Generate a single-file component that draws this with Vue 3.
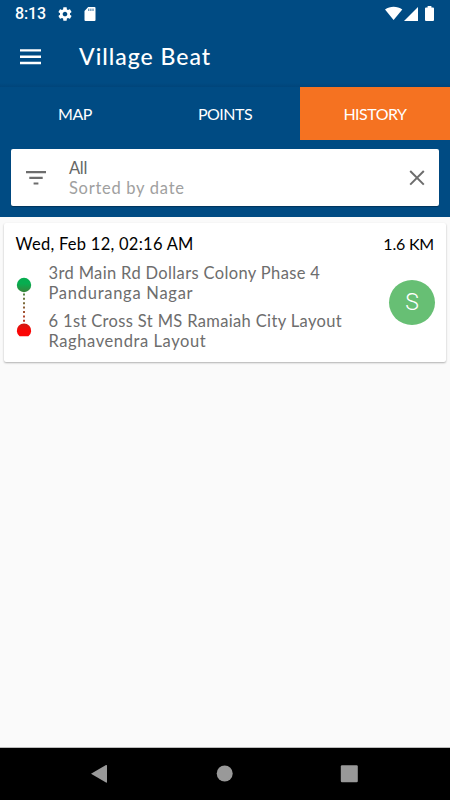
<template>
    <div class="screen">
        <div class="status-bar">
            <span class="clock">8:13</span>
            <svg class="gear" viewBox="0 0 24 24" width="16" height="16">
                <path fill="#fff" d="M19.43 12.98c.04-.32.07-.64.07-.98s-.03-.66-.07-.98l2.11-1.65c.19-.15.24-.42.12-.64l-2-3.46c-.12-.22-.39-.3-.61-.22l-2.49 1c-.52-.4-1.08-.73-1.69-.98l-.38-2.65C14.46 2.18 14.25 2 14 2h-4c-.25 0-.46.18-.49.42l-.38 2.65c-.61.25-1.17.59-1.69.98l-2.49-1c-.23-.09-.49 0-.61.22l-2 3.46c-.13.22-.07.49.12.64l2.11 1.65c-.04.32-.07.65-.07.98s.03.66.07.98l-2.11 1.65c-.19.15-.24.42-.12.64l2 3.46c.12.22.39.3.61.22l2.49-1c.52.4 1.08.73 1.69.98l.38 2.65c.03.24.24.42.49.42h4c.25 0 .46-.18.49-.42l.38-2.65c.61-.25 1.17-.59 1.69-.98l2.49 1c.23.09.49 0 .61-.22l2-3.46c.12-.22.07-.49-.12-.64l-2.11-1.65zM12 15.5c-1.93 0-3.5-1.57-3.5-3.5s1.57-3.5 3.5-3.5 3.5 1.57 3.5 3.5-1.57 3.5-3.5 3.5z" />
            </svg>
            <svg class="sd" viewBox="0 0 12 14" width="12" height="14">
                <path fill="#fff" d="M4.2 0H10.5Q11.5 0 11.5 1V13Q11.5 14 10.5 14H1.5Q.5 14 .5 13V4z" />
                <path stroke="#004b83" stroke-width=".8" d="M4.8 1.6v2.4M6.9 1.6v2.4M9 1.6v2.4" />
            </svg>
            <div class="signals">
                <svg viewBox="0 0 33 16" width="33" height="16">
                    <path fill="#fff" d="M0 3.5C5-.3 12.300-.3 17.300 3.500L8.600 14z" />
                    <path fill="#fff" d="M33 1V15H19z" />
                </svg>
                <svg class="battery" viewBox="0 0 9 15" width="9" height="15">
                    <path fill="#fff" d="M2.600 0h3.800v1.400H8Q9 1.400 9 2.400V14Q9 15 8 15H1Q0 15 0 14V2.400Q0 1.400 1 1.400h1.600z" />
                </svg>
            </div>
        </div>

        <div class="toolbar">
            <svg class="burger" viewBox="0 0 21 16" width="21" height="16">
                <path fill="#fff" d="M0 .2h21v2.400H0zM0 6.500h21v2.400H0zM0 12.800h21v2.400H0z" />
            </svg>
            <h1>Village Beat</h1>
        </div>

        <div class="tabs">
            <div v-for="tab in tabs" :key="tab" class="tab" :class="{ active: tab === current }">
                <span>{{ tab }}</span>
            </div>
        </div>

        <div class="filter-wrap">
            <div class="filter">
                <svg class="filter-icon" viewBox="0 0 20 14" width="20" height="14">
                    <path fill="#6d6d6d" d="M0 0h20v2.200H0zM3.300 5.800h13.400V8H3.300zM7.600 11.500h4.800v2.100H7.600z" />
                </svg>
                <div class="filter-text">
                    <div class="name">All</div>
                    <div class="sort">Sorted by date</div>
                </div>
                <svg class="close" viewBox="0 0 16 16" width="16" height="16">
                    <path stroke="#6d6d6d" stroke-width="2" d="M1.200 1l13.600 13.600M14.800 1L1.200 14.600" />
                </svg>
            </div>
        </div>

        <div class="list">
            <div v-for="(trip, index) in trips" :key="index" class="trip">
                <div class="trip-head">
                    <span class="date">{{ trip.date }}</span>
                    <span class="distance">{{ trip.distance }}</span>
                </div>
                <div class="trip-body">
                    <svg class="route" viewBox="0 0 16 60" width="16" height="60">
                        <defs>
                            <linearGradient id="start" x1="0" y1="0" x2="0" y2="1">
                                <stop offset="0.4" stop-color="#07ad50" />
                                <stop offset="1" stop-color="#38843a" />
                            </linearGradient>
                            <linearGradient id="end" x1="0" y1="0" x2="0" y2="1">
                                <stop offset="0" stop-color="#cf1c14" />
                                <stop offset="0.6" stop-color="#fb0505" />
                            </linearGradient>
                            <linearGradient id="line" gradientUnits="userSpaceOnUse" x1="0" y1="14" x2="0" y2="46">
                                <stop offset="0" stop-color="#4f8a45" />
                                <stop offset="1" stop-color="#cf3127" />
                            </linearGradient>
                        </defs>
                        <path stroke="url(#line)" stroke-width="2" stroke-dasharray="2 2.4" d="M7 15.400L7.010 46" />
                        <circle cx="7" cy="7" r="7.2" fill="url(#start)" />
                        <path fill="url(#end)" d="M2.600 58.300a7.200 7.200 0 1 1 8.800 0z" />
                    </svg>
                    <div class="places">
                        <div v-for="(place, i) in trip.places" :key="i" class="place">
                            <div v-for="(line, n) in place" :key="n">
                                <span :style="{ letterSpacing: line.spacing + 'px' }">{{ line.text }}</span>
                            </div>
                        </div>
                    </div>
                    <div class="avatar">{{ trip.initial }}</div>
                </div>
            </div>
        </div>

        <div class="nav-bar">
            <svg viewBox="0 0 450 52" width="450" height="52">
                <path fill="#999" d="M91 25.700L106 17Q107 16.600 107 17.500V34Q107 35 106 34.500z" />
                <circle cx="224.7" cy="25.5" r="8" fill="#999" />
                <rect x="340.8" y="17.2" width="17" height="17" rx="1.2" fill="#999" />
            </svg>
        </div>
    </div>
</template>

<script setup>
import { ref } from 'vue'

const tabs = ['MAP', 'POINTS', 'HISTORY']
const current = ref('HISTORY')

const trips = ref([
    {
        date: 'Wed, Feb 12, 02:16 AM',
        distance: '1.6 KM',
        initial: 'S',
        places: [
            [
                { text: '3rd Main Rd Dollars Colony Phase 4', spacing: 0.36 },
                { text: 'Panduranga Nagar', spacing: 0.73 },
            ],
            [
                { text: '6 1st Cross St MS Ramaiah City Layout', spacing: 0.35 },
                { text: 'Raghavendra Layout', spacing: 0.59 },
            ],
        ],
    },
])
</script>

<style>
body {
    background: #fafafa;
}
</style>

<style scoped>
.screen {
    width: 450px;
    height: 800px;
    display: flex;
    flex-direction: column;
    background: #fafafa;
    font-family: Lato, sans-serif;
    overflow: hidden;
    white-space: nowrap;
}

svg {
    display: block;
    flex: none;
}

.status-bar {
    height: 27px;
    flex: none;
    display: flex;
    align-items: center;
    padding-left: 15px;
    background: #004b83;
    color: #fff;
}

.clock {
    width: 42px;
    font: 500 16px/20px Roboto, sans-serif;
    letter-spacing: -0.1px;
}

.sd {
    margin-left: 11px;
}

.signals {
    display: flex;
    align-items: center;
    margin-left: auto;
    padding-right: 16px;
}

.battery {
    margin-left: 7px;
}

.toolbar {
    height: 60px;
    flex: none;
    display: flex;
    align-items: center;
    padding-left: 20px;
    box-sizing: border-box;
    background: linear-gradient(#004b83 56px, #00457a);
    color: #fff;
}

h1 {
    margin: -2px 0 0 38px;
    font-size: 23px;
    font-weight: 500;
    line-height: 30px;
    letter-spacing: 1px;
}

.tabs {
    height: 53px;
    flex: none;
    display: flex;
    background: #004b83;
}

.tab {
    flex: 1;
    display: flex;
    align-items: center;
    justify-content: center;
    color: #fff;
    font-size: 16px;
    letter-spacing: -0.5px;
}

.tab.active {
    background: #f57221;
}

.filter-wrap {
    height: 77px;
    flex: none;
    box-sizing: border-box;
    padding: 9px 11px;
    background: #004b83;
}

.filter {
    height: 57px;
    box-sizing: border-box;
    display: flex;
    align-items: center;
    padding: 0 14px 0 15px;
    background: #fff;
    border-radius: 2px;
    box-shadow: 0 1px 1px rgba(0, 0, 0, 0.3);
}

.filter-text {
    margin-left: 23px;
    font-size: 16.5px;
    line-height: 20px;
}

.name {
    color: #666;
    letter-spacing: -0.3px;
}

.sort {
    color: #a0a0a0;
    letter-spacing: 0.72px;
}

.close {
    margin-left: auto;
}

.list {
    flex: 1;
    padding: 6px 4px;
}

.trip {
    height: 139px;
    box-sizing: border-box;
    padding: 11px 12px 0 11.5px;
    background: #fff;
    border-radius: 2px;
    box-shadow: 0 1px 2px rgba(0, 0, 0, 0.3);
}

.trip-head {
    display: flex;
    justify-content: space-between;
    font-size: 16.5px;
    line-height: 20px;
    color: #000;
}

.date {
    letter-spacing: 0.27px;
}

.distance {
    font-size: 16px;
    letter-spacing: -0.2px;
}

.trip-body {
    display: flex;
    padding-top: 9px;
}

.route {
    margin: 15px 0 0 1.5px;
    overflow: visible;
}

.places {
    flex: 1;
    margin-left: 15.5px;
    font-size: 16.5px;
    line-height: 20px;
    color: #6d6d6d;
}

.place {
    margin-bottom: 8px;
}

.avatar {
    width: 46px;
    height: 45px;
    margin: 17px -1px 0 0;
    border-radius: 50%;
    background: #67bf74;
    color: #fff;
    font: 300 23px/45px Roboto, sans-serif;
    text-align: center;
}

.nav-bar {
    height: 52px;
    flex: none;
    background: #000;
    box-shadow: 0 -1px 0 #bbb;
}
</style>
